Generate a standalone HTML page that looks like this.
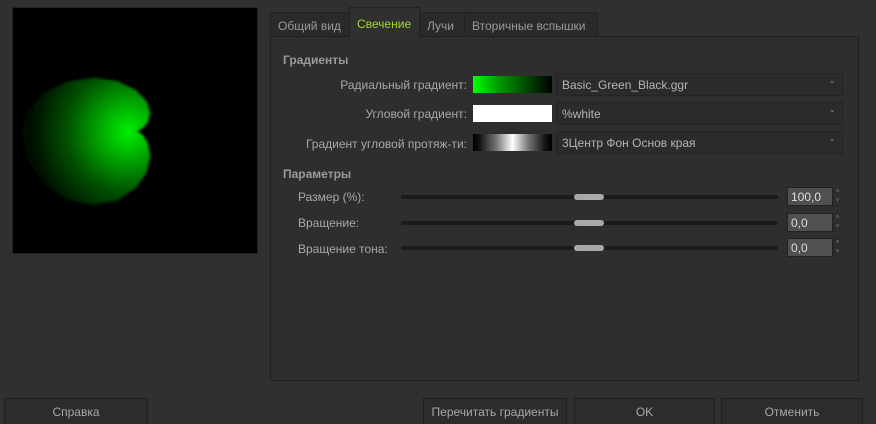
<!DOCTYPE html>
<html><head><meta charset="utf-8"><style>
*{box-sizing:border-box;margin:0;padding:0}
body{width:876px;height:424px;background:#303030;font-family:"Liberation Sans","DejaVu Sans",sans-serif;font-size:12px;color:#a8a8a8;position:relative;overflow:hidden}
.a{position:absolute;white-space:nowrap}
.tab{position:absolute;top:12px;height:25px;border:1px solid #222;border-bottom:none;background:#2a2a2a;color:#9a9a9a;padding:6px 7px 0;white-space:nowrap;font-size:12px}
.panel{position:absolute;left:270px;top:36px;width:589px;height:345px;border:1px solid #1f1f1f;background:#2e2e2e}
.lbl{position:absolute;text-align:right;white-space:nowrap}
.combo{position:absolute;left:556px;width:287px;height:23px;border:1px solid #242424;background:#2b2b2b;color:#b4b4b4;padding:4px 5px;font-size:12px}
.combo:after{content:"⌄";position:absolute;right:6px;top:1px;font-size:9px;color:#888}
.sw{position:absolute;left:473px;width:79px;height:17px}
.track{position:absolute;left:401px;width:377px;height:4px;background:#1b1b1b;border-radius:2px}
.knob{position:absolute;left:574px;width:30px;height:6px;background:#a9a9a9;border-radius:3px}
.spin{position:absolute;left:787px;width:46px;height:19px;background:#505050;border:1px solid #222;color:#ddd;padding:2px 3px;font-size:12px}
.arr{position:absolute;left:833px;width:9px;height:19px;border:1px solid #2a2a2a;font-size:6px;color:#888;text-align:center;line-height:9px}
.btn{position:absolute;top:398px;height:26px;border:1px solid #1f1f1f;border-bottom:none;background:#2c2c2c;color:#a8a8a8;text-align:center;padding-top:6px;font-size:12px;white-space:nowrap}
</style></head><body>
<div class="a" style="left:12px;top:7px;width:246px;height:247px;background:#000;border:1px solid #222">
<svg width="246" height="247" viewBox="12 7 246 247" style="position:absolute;left:-1px;top:-1px">
<defs><radialGradient id="g" cx="128" cy="131" r="112" gradientUnits="userSpaceOnUse">
<stop offset="0" stop-color="#00f000"/><stop offset="0.25" stop-color="#00a800"/><stop offset="0.55" stop-color="#005000"/><stop offset="0.85" stop-color="#001200"/><stop offset="1" stop-color="#000"/></radialGradient>
<filter id="b"><feGaussianBlur stdDeviation="1.2"/></filter></defs>
<path filter="url(#b)" fill="url(#g)" d="M136,131 L137.9,130.6 142.6,128.3 147.8,122.5 150.3,113.2 146.9,101.6 136,90 117.4,81 93.2,77.7 67.2,81.5 43.9,92.7 27.8,110.1 22,131 27.8,160 43.9,184.2 67.2,199.8 93.2,205 117.4,200.4 136,188 146.9,171.8 150.3,155.7 147.8,142.8 142.6,134.8 137.9,131.5Z"/>
</svg></div>
<div class="tab" style="left:270px;width:80px">Общий вид</div>
<div class="tab" style="left:349px;top:7px;height:31px;width:71px;background:#303030;color:#a6d630;padding-top:9px">Свечение</div>
<div class="tab" style="left:419px;width:46px">Лучи</div>
<div class="tab" style="left:464px;width:134px">Вторичные вспышки</div>
<div class="panel"></div>
<div class="tab" style="left:350px;top:35px;height:3px;width:69px;border:none;background:#303030;padding:0"></div>
<div class="a" style="left:283px;top:53px;font-weight:bold;color:#9a9a9a;font-size:12px">Градиенты</div>
<div class="lbl" style="right:409px;top:78px">Радиальный градиент:</div>
<div class="sw" style="top:76px;background:linear-gradient(90deg,#00ff00,#00a000 30%,#000)"></div>
<div class="combo" style="top:73px">Basic_Green_Black.ggr</div>
<div class="lbl" style="right:409px;top:107px">Угловой градиент:</div>
<div class="sw" style="top:105px;background:#fff"></div>
<div class="combo" style="top:102px">%white</div>
<div class="lbl" style="right:409px;top:137px">Градиент угловой протяж-ти:</div>
<div class="sw" style="top:134px;background:linear-gradient(90deg,#000,#111 8%,#777 30%,#fff 50%,#777 70%,#111 92%,#000)"></div>
<div class="combo" style="top:131px">3Центр Фон Основ края</div>
<div class="a" style="left:283px;top:167px;font-weight:bold;color:#9a9a9a;font-size:12px">Параметры</div>
<div class="a" style="left:298px;top:190px">Размер (%):</div>
<div class="track" style="top:195px"></div><div class="knob" style="top:194px"></div>
<div class="spin" style="top:187px">100,0</div><div class="arr" style="top:187px">˄<br>˅</div>
<div class="a" style="left:298px;top:216px">Вращение:</div>
<div class="track" style="top:221px"></div><div class="knob" style="top:220px"></div>
<div class="spin" style="top:213px">0,0</div><div class="arr" style="top:213px">˄<br>˅</div>
<div class="a" style="left:298px;top:242px">Вращение тона:</div>
<div class="track" style="top:246px"></div><div class="knob" style="top:245px"></div>
<div class="spin" style="top:238px">0,0</div><div class="arr" style="top:238px">˄<br>˅</div>
<div class="btn" style="left:4px;width:144px">Справка</div>
<div class="btn" style="left:423px;width:144px">Перечитать градиенты</div>
<div class="btn" style="left:574px;width:141px">OK</div>
<div class="btn" style="left:721px;width:142px">Отменить</div>
</body></html>
